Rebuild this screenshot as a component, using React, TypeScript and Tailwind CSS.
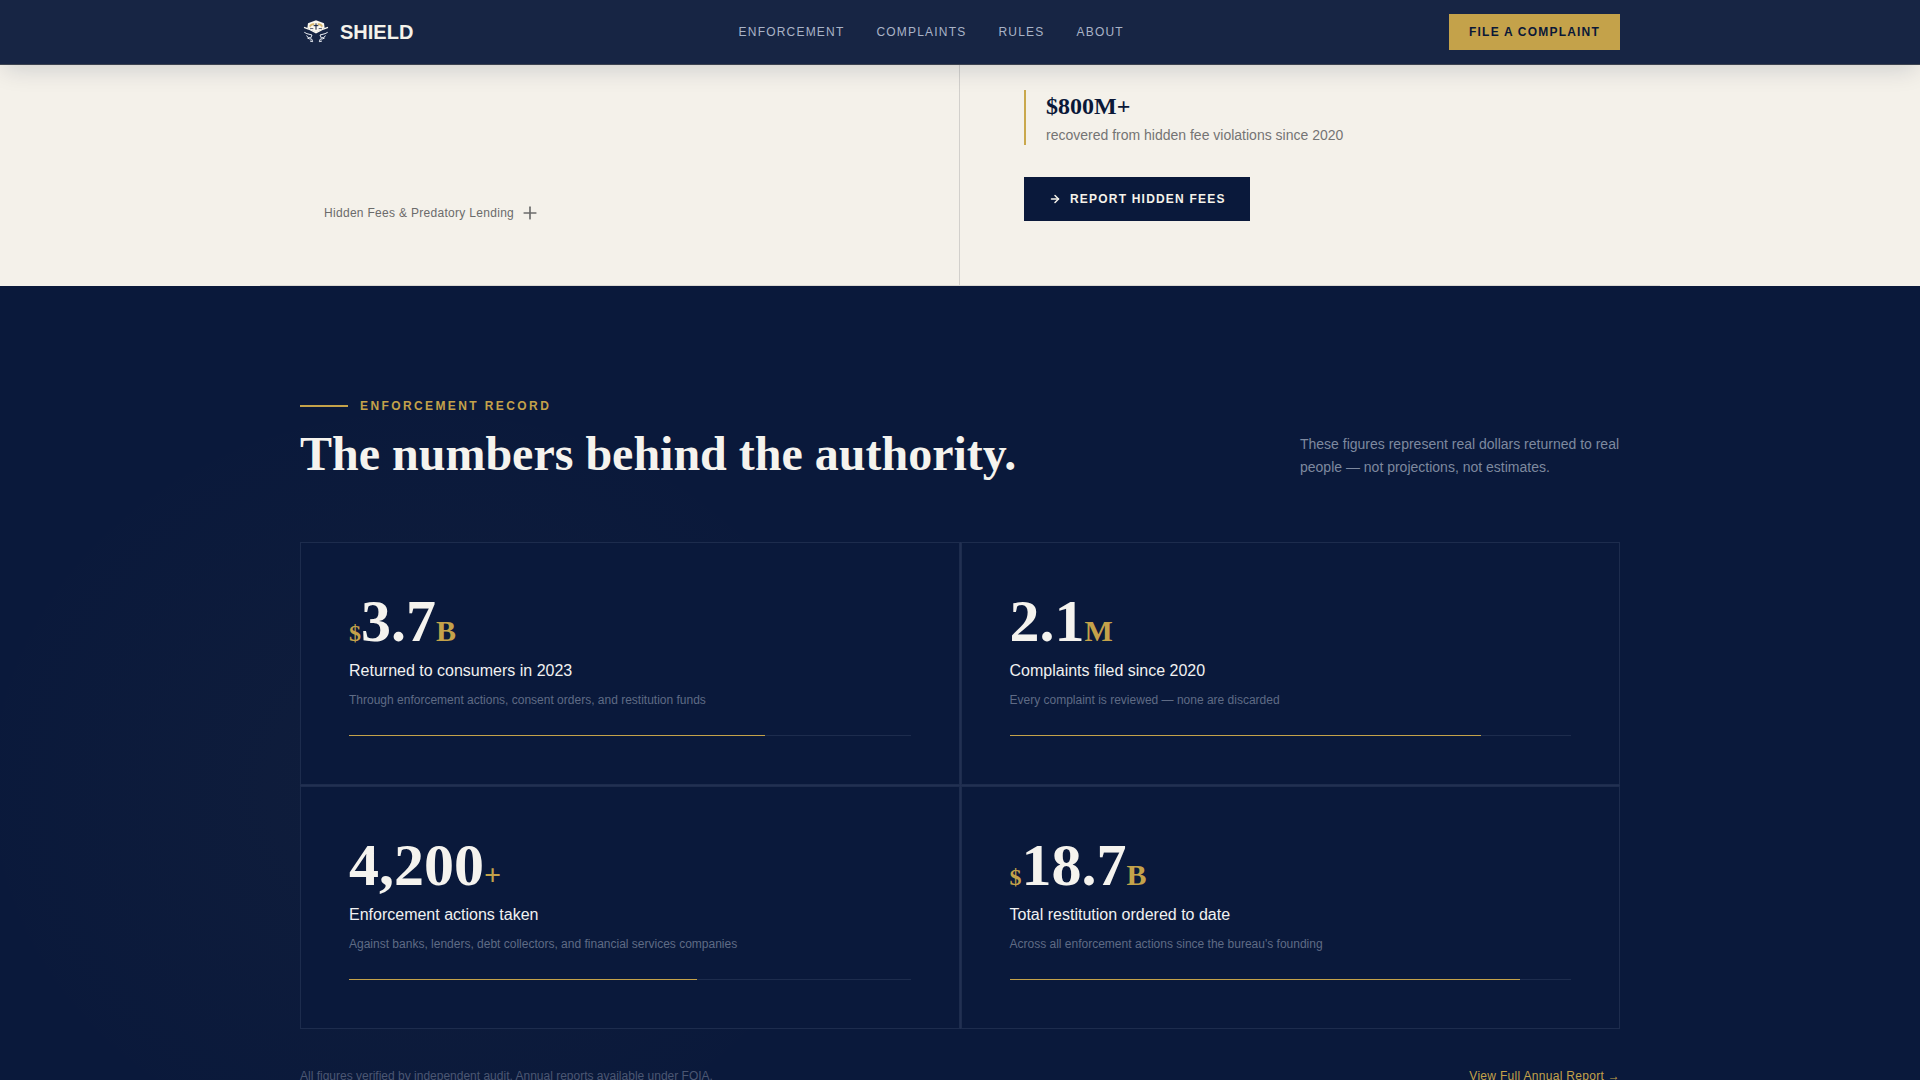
import { ArrowRight, Plus } from "lucide-react";

const navLinks = ["Enforcement", "Complaints", "Rules", "About"];

const stats = [
  {
    prefix: "$",
    value: "3.7",
    suffix: "B",
    label: "Returned to consumers in 2023",
    detail: "Through enforcement actions, consent orders, and restitution funds",
    progress: 74,
  },
  {
    prefix: "",
    value: "2.1",
    suffix: "M",
    label: "Complaints filed since 2020",
    detail: "Every complaint is reviewed — none are discarded",
    progress: 84,
  },
  {
    prefix: "",
    value: "4,200",
    suffix: "+",
    label: "Enforcement actions taken",
    detail: "Against banks, lenders, debt collectors, and financial services companies",
    progress: 62,
  },
  {
    prefix: "$",
    value: "18.7",
    suffix: "B",
    label: "Total restitution ordered to date",
    detail: "Across all enforcement actions since the bureau's founding",
    progress: 91,
  },
];

function Logo() {
  return (
    <svg className="h-8 w-8" viewBox="30 48 96 96" fill="none" aria-hidden="true">
      {/* Crest */}
      <path d="M78 61 L102 70 L104 84 L78 97 L52 84 L54 70 Z" fill="#fbf8f0" />
      <path d="M57 79 Q62 68 73 70 L73 75 Q64 75 62 81 Z" fill="#d6b66c" />
      <path d="M83 70 Q94 68 99 79 L94 81 Q92 75 83 75 Z" fill="#d6b66c" />
      <path d="M78 70 V89 M71 77 H85" stroke="#0a1838" strokeWidth="3" />
      <path d="M60 85 L70 86 M96 85 L86 86" stroke="#0a1838" strokeWidth="2" />
      {/* Wings */}
      <path d="M42 82 L56 87 L78 98 L100 87 L114 82" stroke="#fbf8f0" strokeWidth="4" />
      <path
        d="M43 97 Q47 101 66 105 L62 114 Q54 114 49 107 M52 114 Q58 118 65 117 L68 125 L60 123"
        stroke="#eef1f6"
        strokeWidth="3"
      />
      <path
        d="M113 97 Q109 101 90 105 L94 114 Q102 114 107 107 M104 114 Q98 118 91 117 L88 125 L96 123"
        stroke="#eef1f6"
        strokeWidth="3"
      />
    </svg>
  );
}

function Header() {
  return (
    <header className="relative z-10 border-b border-[#3c4350] bg-[#172544] shadow-[0_8px_24px_-4px_rgba(10,24,56,0.16)]">
      <div className="mx-auto flex h-16 max-w-[1400px] items-center justify-between px-10">
        <a href="#" className="flex items-center gap-2">
          <Logo />
          <span className="text-xl font-bold text-[#f5f2ea]">SHIELD</span>
        </a>

        <nav className="flex items-center gap-8">
          {navLinks.map((link) => (
            <a
              key={link}
              href={`#${link.toLowerCase()}`}
              className="text-xs tracking-widest text-[#a9b3c7] uppercase"
            >
              {link}
            </a>
          ))}
        </nav>

        <button className="h-9 bg-[#c4a24a] px-5 text-xs font-bold tracking-widest text-[#0a1838] uppercase">
          File a Complaint
        </button>
      </div>
    </header>
  );
}

function FeesPanel() {
  return (
    <section className="bg-[#f4f1ea]">
      <div className="mx-auto grid max-w-[1400px] grid-cols-2 border-b border-[#dcd9d3]">
        <div className="flex items-end border-r border-[#d2d0cc] px-16 pb-16">
          <button className="flex items-center gap-1.5 text-xs tracking-wide text-[#6b6b6b]">
            Hidden Fees &amp; Predatory Lending
            <Plus className="-my-0.5 h-5 w-5" strokeWidth={2} />
          </button>
        </div>

        <div className="px-16 pt-[25px] pb-16">
          <div className="border-l-2 border-[#c9a84c] pl-5">
            <p className="font-['Liberation_Serif',serif] text-2xl font-bold text-[#0a1838]">$800M+</p>
            <p className="mt-1 text-sm leading-[19px] text-[#747474]">
              recovered from hidden fee violations since 2020
            </p>
          </div>
          <button className="mt-8 flex h-11 items-center gap-2 bg-[#0a193b] px-6 text-xs font-bold tracking-widest text-[#f5f2ea] uppercase">
            <span className="flex w-3.5 justify-center">
              <ArrowRight className="h-3 w-3" strokeWidth={3} />
            </span>
            Report Hidden Fees
          </button>
        </div>
      </div>
    </section>
  );
}

function StatCard({ stat }: { stat: (typeof stats)[number] }) {
  return (
    <div className="border border-[#1d2c4d] bg-[#0a193b] p-12">
      <p className="font-['Liberation_Serif',serif] text-6xl leading-none font-bold text-[#f5f3ee]">
        {stat.prefix && <span className="text-2xl leading-none text-[#c4a24a]">{stat.prefix}</span>}
        {stat.value}
        <span className="text-3xl leading-none text-[#c4a24a]">{stat.suffix}</span>
      </p>
      <p className="mt-2 text-base text-[#f1f1f1]">{stat.label}</p>
      <p className="mt-2 text-xs leading-[18px] text-[#5f6b85]">{stat.detail}</p>
      <div className="mt-[26px] h-px bg-[#1d2c4d]">
        <div className="h-px bg-[#c4a24a]" style={{ width: `${stat.progress}%` }} />
      </div>
    </div>
  );
}

function EnforcementRecord() {
  return (
    <section className="flex-1 bg-[#0a193b] bg-[radial-gradient(ellipse_460px_400px_at_22%_55%,rgba(201,168,76,0.03),transparent)] pt-28 pb-28">
      <div className="mx-auto max-w-[1400px] px-10">
        <div className="flex items-end justify-between">
          <div>
            <div className="flex items-center gap-3">
              <span className="h-0.5 w-12 bg-[#c4a24a]" />
              <span className="text-xs font-bold tracking-[0.2em] text-[#c4a24a] uppercase">
                Enforcement Record
              </span>
            </div>
            <h2 className="mt-3.5 font-['Liberation_Serif',serif] text-5xl leading-[51px] font-bold text-[#f5f3ee]">
              The numbers behind the authority.
            </h2>
          </div>
          <p className="max-w-80 text-sm leading-[23px] text-[#7e899f]">
            These figures represent real dollars returned to real people — not projections, not estimates.
          </p>
        </div>

        <div className="mt-[63px] grid grid-cols-2 gap-px bg-[#223052]">
          {stats.map((stat) => (
            <StatCard key={stat.label} stat={stat} />
          ))}
        </div>

        <div className="mt-[39px] flex items-center justify-between text-xs">
          <p className="text-[#4b5773]">
            All figures verified by independent audit. Annual reports available under FOIA.
          </p>
          <a href="#report" className="tracking-wide text-[#c4a24a]">
            View Full Annual Report →
          </a>
        </div>
      </div>
    </section>
  );
}

export default function App() {
  return (
    <div className="flex h-screen flex-col overflow-hidden font-['Liberation_Sans',sans-serif]">
      <Header />
      <FeesPanel />
      <EnforcementRecord />
    </div>
  );
}
